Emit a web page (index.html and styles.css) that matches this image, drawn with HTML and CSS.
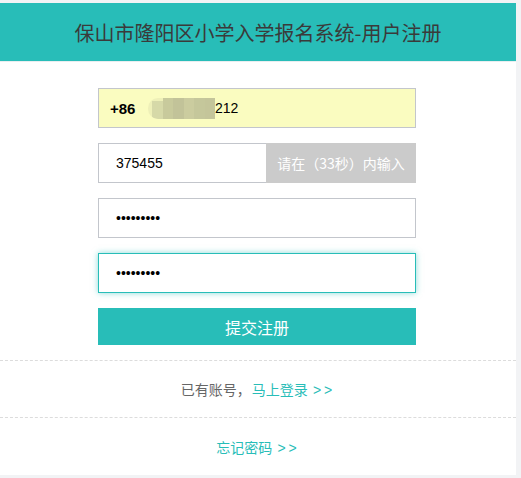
FILE: index.html
```html
<!DOCTYPE html>
<html lang="zh-CN">
<head>
<meta charset="utf-8">
<title>用户注册</title>
<link rel="stylesheet" href="styles.css">
</head>
<body>
<div class="card">
  <header class="header">保山市隆阳区小学入学报名系统-用户注册</header>
  <form class="form">
    <div class="field field-phone">
      <span class="prefix">+86</span>
      <span class="mask"><i></i><i></i><i></i><i></i><i></i><i></i></span>
      <span class="phone-tail">212</span>
    </div>
    <div class="field field-code">
      <input class="input" type="text" value="375455">
      <span class="code-btn">请在（33秒）内输入</span>
    </div>
    <div class="field">
      <input class="input" type="password" value="123456789">
    </div>
    <div class="field is-focus">
      <input class="input" type="password" value="123456789">
    </div>
    <button type="button" class="submit">提交注册</button>
  </form>
  <div class="row row-login">已有账号<span class="comma">，</span><a class="link">马上登录 <span class="arrows">&gt;&gt;</span></a></div>
  <div class="row row-forgot"><a class="link">忘记密码 <span class="arrows">&gt;&gt;</span></a></div>
</div>
</body>
</html>
```
FILE: styles.css
```css
* { box-sizing: border-box; }
html, body { margin: 0; padding: 0; }
body {
  background: #f2f3f5;
  font-family: "Liberation Sans", Arial, "Noto Sans CJK SC", sans-serif;
  width: 521px;
  height: 478px;
  overflow: hidden;
}
.card {
  margin-top: 3px;
  width: 516px;
  height: 472px;
  background: #fff;
  display: flex;
  flex-direction: column;
}
.header {
  height: 59px;
  background: #28bdb8;
  color: #3a3a3a;
  font-family: "Noto Sans CJK SC", sans-serif;
  font-size: 20px;
  display: flex;
  align-items: center;
  justify-content: center;
  border-bottom: 1px solid #e9eef0;
}
.form {
  width: 318px;
  margin: 26px 0 0 98px;
  display: flex;
  flex-direction: column;
  gap: 15px;
}
.field {
  height: 40px;
  border: 1px solid #c3c6cc;
  background: #fff;
  display: flex;
  align-items: center;
}
.input {
  flex: 1;
  min-width: 0;
  height: 100%;
  border: 0;
  outline: 0;
  background: transparent;
  padding: 0 0 0 17px;
  font-family: "Liberation Sans", Arial, sans-serif;
  font-size: 14px;
  color: #000;
}
.field-phone {
  background: #fafcc0;
  padding-left: 11px;
  font-size: 14px;
}
.prefix {
  font-weight: bold;
  font-size: 15px;
  color: #000;
  width: 38px;
}
.mask {
  display: flex;
  height: 21px;
  width: 67px;
  border-radius: 10px 0 0 10px;
  overflow: hidden;
  background: #eef0b8;
  padding-left: 4px;
}
.mask i {
  flex: 1;
  height: 100%;
  background: #c9cc9f;
}
.mask i:nth-child(1) { background: #d6d9a8; margin-top: 3px; }
.mask i:nth-child(2) { background: #c8ca9c; }
.mask i:nth-child(3) { background: #c2c399; }
.mask i:nth-child(4) { background: #cbcc9f; }
.mask i:nth-child(5) { background: #c5c79b; }
.mask i:nth-child(6) { background: #c4c59a; }
.phone-tail {
  color: #000;
  font-size: 14px;
}
.field-code .code-btn {
  width: 150px;
  height: 40px;
  margin: -1px -1px -1px 0;
  background: #cbcbcb;
  color: #fff;
  font-family: "Noto Sans CJK SC", sans-serif;
  font-size: 14px;
  display: flex;
  align-items: center;
  justify-content: center;
}
.is-focus {
  border-color: #28bdb8;
  box-shadow: 0 0 6px rgba(40, 189, 184, 0.55);
}
.submit {
  height: 37px;
  border: 0;
  background: #28bdb8;
  color: #fff;
  font-family: "Noto Sans CJK SC", sans-serif;
  font-size: 16px;
  padding: 0;
  cursor: pointer;
}
.row {
  display: flex;
  align-items: center;
  justify-content: center;
  font-family: "Noto Sans CJK SC", sans-serif;
  font-size: 14px;
  color: #666;
  border-top: 1px dashed #dcdcdc;
}
.comma { margin-right: 1px; }
.arrows {
  font-family: "Liberation Sans", Arial, sans-serif;
  letter-spacing: 3px;
  margin-left: 2px;
}
.row-login { margin-top: 15px; height: 57px; }
.row-forgot { flex: 1; }
.link { color: #28bdb8; text-decoration: none; }
```
